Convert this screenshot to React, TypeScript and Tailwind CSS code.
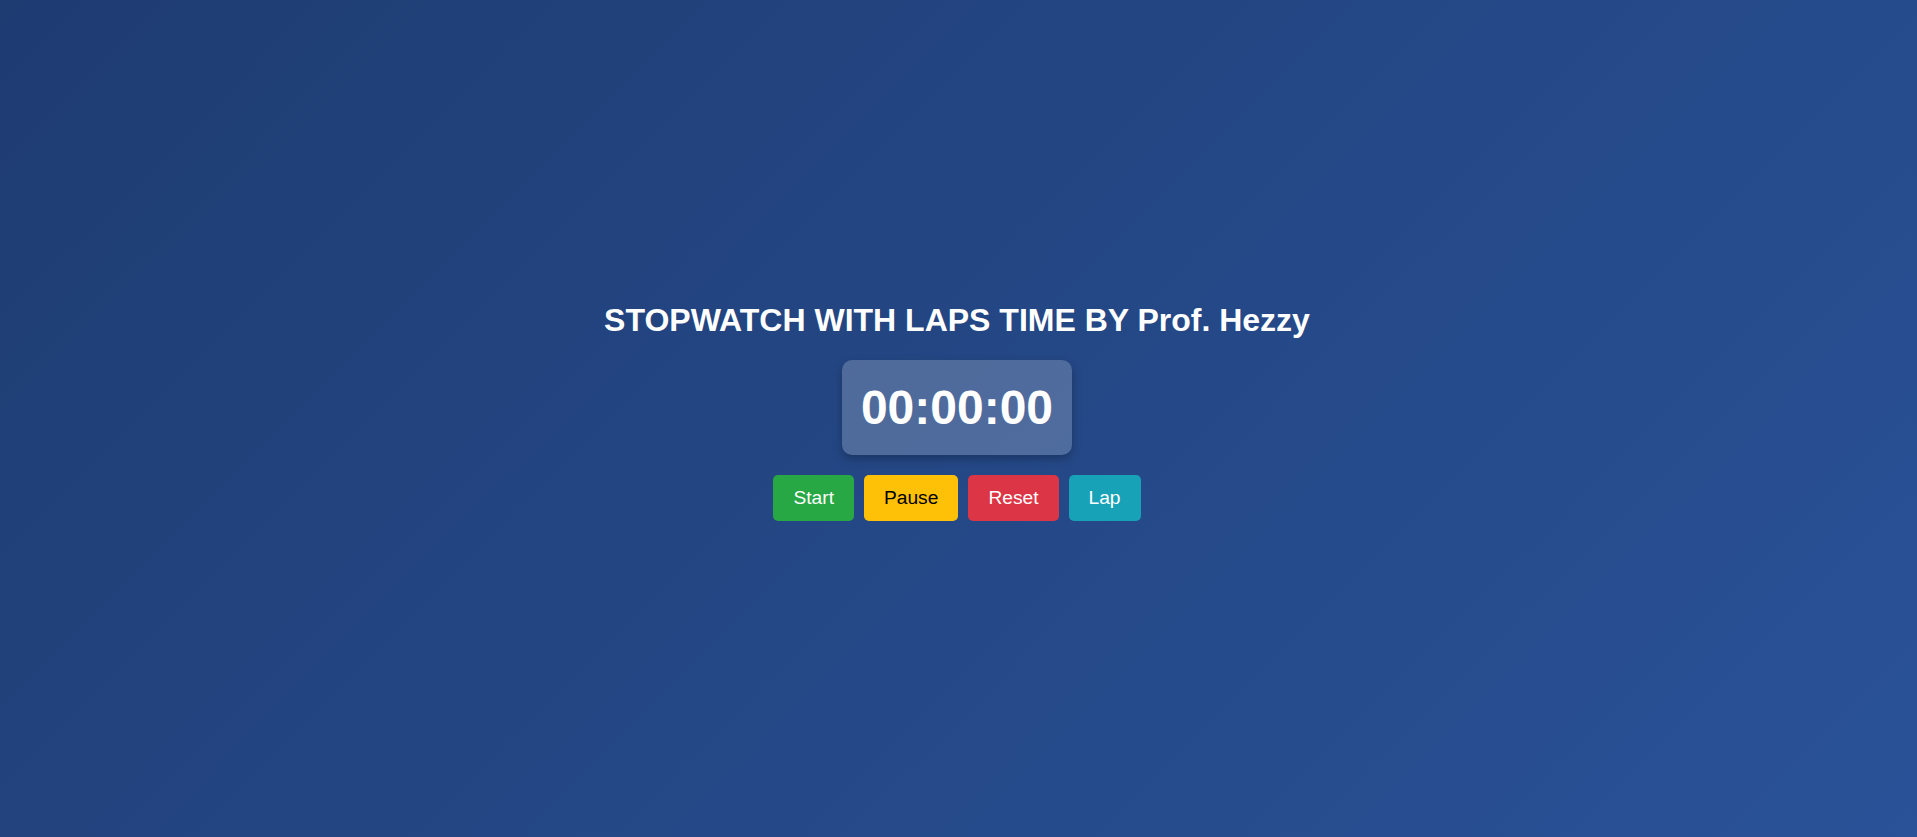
const buttons = [
  { label: "Start", cls: "bg-[#28a745] text-white" },
  { label: "Pause", cls: "bg-[#ffc107] text-black" },
  { label: "Reset", cls: "bg-[#dc3545] text-white" },
  { label: "Lap", cls: "bg-[#17a2b8] text-white" },
];

export default function App() {
  return (
    <div className="min-h-screen pr-[3px] flex flex-col items-center justify-center bg-[linear-gradient(135deg,#1e3c72,#2a5298)] text-white font-['Liberation_Sans',Arial,sans-serif]">
      <h1 className="my-[21.44px] text-[32px] font-bold leading-[normal]">
        STOPWATCH WITH LAPS TIME BY Prof. Hezzy
      </h1>
      <div className="px-[19px] py-5 rounded-[10px] bg-white/20 shadow-[0_4px_10px_rgba(0,0,0,0.25)] text-[48px] font-bold leading-[normal]">
        00:00:00
      </div>
      <div className="mt-5 flex gap-[10px]">
        {buttons.map((b) => (
          <button
            key={b.label}
            className={`px-5 py-3 rounded-[5px] text-[19.2px] leading-[normal] cursor-pointer ${b.cls}`}
          >
            {b.label}
          </button>
        ))}
      </div>
      <ul className="mt-5 mb-4 list-none p-0" />
    </div>
  );
}
